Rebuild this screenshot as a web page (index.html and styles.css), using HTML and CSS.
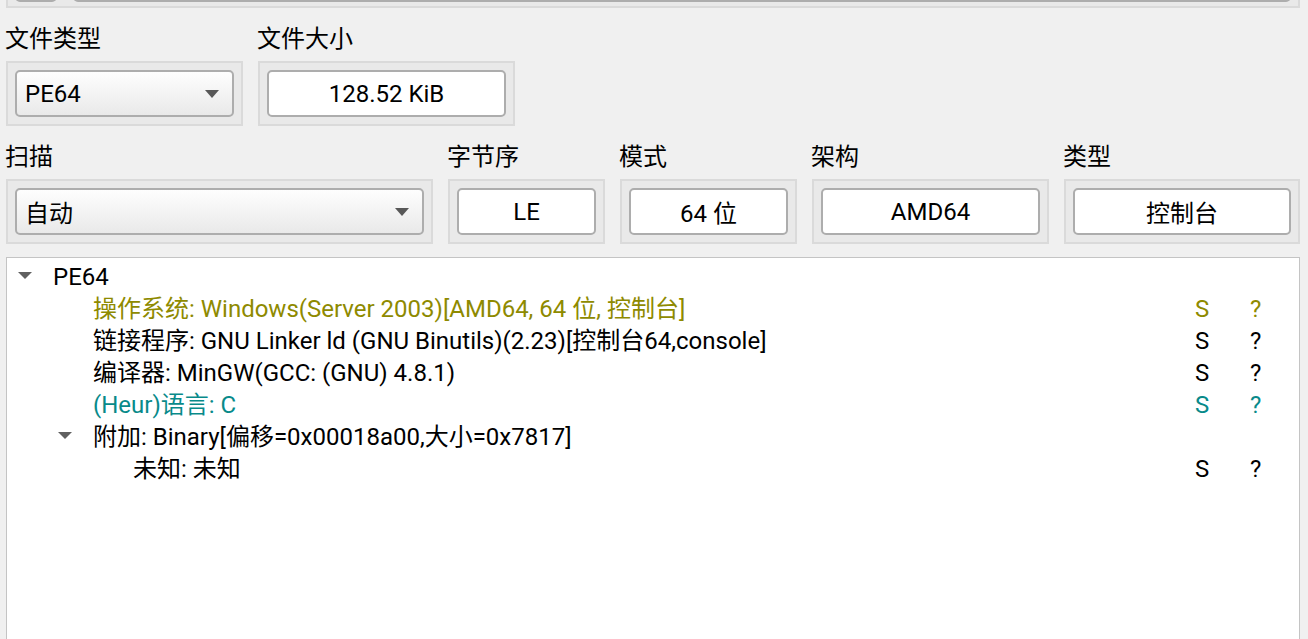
FILE: index.html
```html
<!DOCTYPE html>
<html lang="zh-CN">

<head>
    <meta charset="UTF-8">
    <meta name="viewport" content="width=device-width, initial-scale=1.0">
    <title>文件信息</title>
    <link rel="stylesheet" href="styles.css">
</head>

<body>
    <div class="page">
        <!-- 上一行, 只露出底边 -->
        <div class="frame clipped">
            <div class="btn"></div>
            <div class="edit wide"></div>
        </div>

        <div class="row row1">
            <div class="field">
                <div class="label">文件类型</div>
                <div class="frame">
                    <div class="combo"><span>PE64</span><i class="arrow"></i></div>
                </div>
            </div>
            <div class="field">
                <div class="label">文件大小</div>
                <div class="frame">
                    <div class="edit">128.52 KiB</div>
                </div>
            </div>
        </div>

        <div class="row row2">
            <div class="field">
                <div class="label">扫描</div>
                <div class="frame">
                    <div class="combo"><span>自动</span><i class="arrow"></i></div>
                </div>
            </div>
            <div class="field">
                <div class="label">字节序</div>
                <div class="frame">
                    <div class="edit">LE</div>
                </div>
            </div>
            <div class="field">
                <div class="label">模式</div>
                <div class="frame">
                    <div class="edit">64 位</div>
                </div>
            </div>
            <div class="field">
                <div class="label">架构</div>
                <div class="frame">
                    <div class="edit">AMD64</div>
                </div>
            </div>
            <div class="field">
                <div class="label">类型</div>
                <div class="frame">
                    <div class="edit">控制台</div>
                </div>
            </div>
        </div>

        <div class="tree">
            <div class="node lv0">
                <span class="branch"><i class="arrow"></i></span>
                <span class="name">PE64</span>
            </div>
            <div class="node lv1 olive">
                <span class="branch"></span>
                <span class="name">操作系统: Windows(Server 2003)[AMD64, 64 位, 控制台]</span>
                <span class="col s">S</span>
                <span class="col q">?</span>
            </div>
            <div class="node lv1">
                <span class="branch"></span>
                <span class="name">链接程序: GNU Linker ld (GNU Binutils)(2.23)[控制台64,console]</span>
                <span class="col s">S</span>
                <span class="col q">?</span>
            </div>
            <div class="node lv1">
                <span class="branch"></span>
                <span class="name">编译器: MinGW(GCC: (GNU) 4.8.1)</span>
                <span class="col s">S</span>
                <span class="col q">?</span>
            </div>
            <div class="node lv1 teal">
                <span class="branch"></span>
                <span class="name">(Heur)语言: C</span>
                <span class="col s">S</span>
                <span class="col q">?</span>
            </div>
            <div class="node lv1">
                <span class="branch"><i class="arrow"></i></span>
                <span class="name">附加: Binary[偏移=0x00018a00,大小=0x7817]</span>
            </div>
            <div class="node lv2">
                <span class="branch"></span>
                <span class="name">未知: 未知</span>
                <span class="col s">S</span>
                <span class="col q">?</span>
            </div>
        </div>
    </div>
</body>

</html>
```

FILE: styles.css
```css
html,
body {
    margin: 0;
    height: 100%;
    overflow: hidden;
}

body {
    background: #f0f0f0;
    color: #000;
    font-family: Roboto, "Noto Sans CJK SC", sans-serif;
    font-size: 24px;
}

.page {
    padding: 0 8px 0 6px;
}

/* 分组框 */
.frame {
    display: flex;
    border: 2px solid #dadada;
    background: #e9e9e9;
    padding: 7px;
}

.clipped {
    margin-top: -54px;
    padding-bottom: 4px;
}

.clipped .btn {
    width: 42px;
    height: 47px;
    border: 2px solid #adadad;
    border-radius: 5px;
    background: #f4f4f4;
    box-sizing: border-box;
}

.clipped .wide {
    flex: 1;
    margin-left: 16px;
}

.row {
    display: flex;
    gap: 15px;
}

.field {
    margin-top: 15px;
}

.label {
    line-height: 32px;
    height: 32px;
    margin-bottom: 6px;
    margin-left: -1px;
    white-space: nowrap;
}

.row1 .field:nth-child(1) {
    width: 237px;
}

.row1 .field:nth-child(2) {
    width: 257px;
}

.row2 .field:nth-child(1) {
    width: 427px;
}

.row2 .field:nth-child(2) {
    width: 157px;
}

.row2 .field:nth-child(3) {
    width: 177px;
}

.row2 .field:nth-child(4) {
    width: 237px;
}

.row2 .field:nth-child(5) {
    flex: 1;
}

.frame>.combo,
.frame>.edit {
    flex: 1;
}

.combo,
.edit {
    height: 47px;
    box-sizing: border-box;
    border: 2px solid #adadad;
    border-radius: 5px;
    display: flex;
    align-items: center;
    white-space: nowrap;
}

.combo {
    background: linear-gradient(#fefefe, #e9e9e9);
    padding: 0 13px 0 8px;
    justify-content: space-between;
}

.edit {
    background: #fff;
    justify-content: center;
}

.arrow {
    display: block;
    width: 0;
    height: 0;
    border-left: 7px solid transparent;
    border-right: 7px solid transparent;
    border-top: 8px solid #585858;
}

/* 结果树 */
.tree {
    margin-top: 13px;
    height: 390px;
    background: #fff;
    border: 1px solid #c4c4c4;
    padding-top: 3px;
}

.node {
    display: flex;
    align-items: center;
    height: 32px;
    line-height: 32px;
    white-space: nowrap;
}

.branch {
    width: 40px;
    height: 32px;
    flex: none;
    display: flex;
    align-items: center;
    justify-content: center;
    margin-left: -2px;
    margin-right: 2px;
}

.branch .arrow {
    border-top-width: 7px;
    border-top-color: #606060;
    margin-top: -3px;
}

.name {
    flex: 1;
    padding-left: 6px;
}

.lv1 {
    padding-left: 40px;
}

.lv2 {
    padding-left: 80px;
}

.col {
    flex: none;
    text-align: left;
}

.col.s {
    width: 55px;
}

.col.q {
    width: 49px;
}

.olive {
    color: #8e8a00;
}

.teal {
    color: #088a8a;
}
```
